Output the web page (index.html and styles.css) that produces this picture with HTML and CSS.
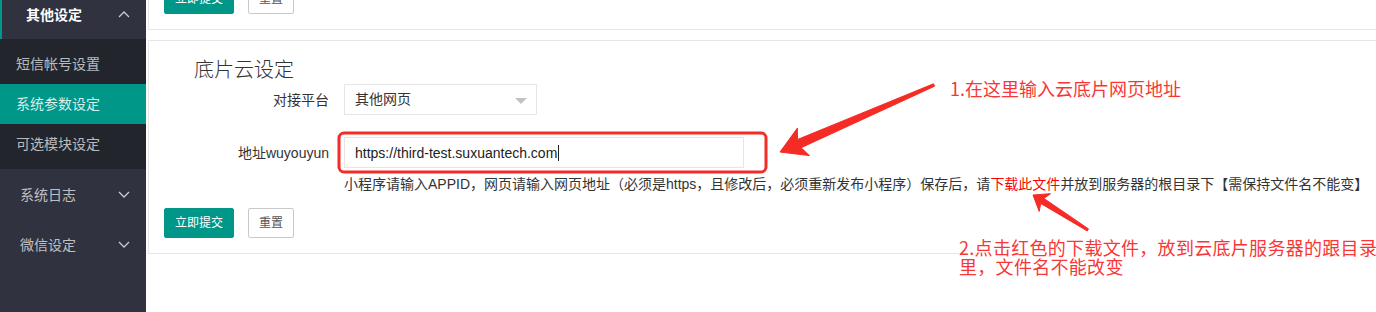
FILE: index.html
```html
<!DOCTYPE html>
<html lang="zh-CN">
<head>
  <meta charset="UTF-8" />
  <meta name="viewport" content="width=device-width, initial-scale=1.0"/>
  <title>系统参数设定</title>
  <link rel="stylesheet" href="styles.css">
</head>
<body>
  <div class="layout">
    <aside class="side">
      <ul class="nav">
        <li class="nav-item open">
          <a href="#">其他设定
            <svg class="chev" width="12" height="7" viewBox="0 0 12 7"><path d="M1 6 L6 1 L11 6" /></svg>
          </a>
          <dl class="nav-child">
            <dd><a href="#">短信帐号设置</a></dd>
            <dd class="active"><a href="#">系统参数设定</a></dd>
            <dd><a href="#">可选模块设定</a></dd>
          </dl>
        </li>
        <li class="nav-item">
          <a href="#">系统日志
            <svg class="chev" width="12" height="7" viewBox="0 0 12 7"><path d="M1 1 L6 6 L11 1" /></svg>
          </a>
        </li>
        <li class="nav-item">
          <a href="#">微信设定
            <svg class="chev" width="12" height="7" viewBox="0 0 12 7"><path d="M1 1 L6 6 L11 1" /></svg>
          </a>
        </li>
      </ul>
    </aside>

    <main class="main">
      <div class="card">
        <div class="btn-row">
          <button class="btn">立即提交</button>
          <button class="btn btn-plain">重置</button>
        </div>
      </div>

      <div class="card">
        <h2 class="card-title">底片云设定</h2>
        <div class="form-row">
          <label class="form-label">对接平台</label>
          <div class="select">其他网页</div>
        </div>
        <div class="form-row">
          <label class="form-label">地址wuyouyun</label>
          <div class="input">https://third-test.suxuantech.com<span class="caret"></span></div>
        </div>
        <div class="form-aux">小程序请输入APPID，网页请输入网页地址（必须是https，且修改后，必须重新发布小程序）保存后，请<a href="#" class="red">下载此文件</a>并放到服务器的根目录下【需保持文件名不能变】</div>
        <div class="btn-row btn-row-bottom">
          <button class="btn">立即提交</button>
          <button class="btn btn-plain">重置</button>
        </div>
      </div>
    </main>
  </div>

  <!-- screenshot markup drawn on top -->
  <div class="markup">
    <svg width="1376" height="312" viewBox="0 0 1376 312">
      <rect x="339" y="133" width="427" height="39" rx="5" class="mark-box" />
      <polygon class="mark-arrow" points="780,152 797.4,128.1 797.5,139.5 933.5,83.8 934.6,86.2 801.1,147.7 809.4,155.6" />
      <polygon class="mark-arrow" points="1033,195 1050.5,193.7 1043.9,198.4 1088.5,228.9 1087.2,230.9 1040.7,203.4 1039.2,211.4" />
    </svg>
    <div class="note note-one">1.在这里输入云底片网页地址</div>
    <div class="note note-two">2.点击红色的下载文件，放到云底片服务器的跟目录里，文件名不能改变</div>
  </div>
</body>
</html>
```

FILE: styles.css
```css
* {
  box-sizing: border-box;
}
html, body {
  margin: 0;
  height: 100%;
  overflow: hidden;
}
body {
  position: relative;
  font-family: "Liberation Sans", "Noto Sans CJK SC", sans-serif;
  font-size: 14px;
  color: #333;
  background: #fff;
}
a {
  text-decoration: none;
}

.layout {
  display: flex;
  height: 100vh;
}

/* side menu */
.side {
  width: 146px;
  flex: none;
  background: #30323f;
  overflow: hidden;
}
.nav {
  list-style: none;
  margin: -11px 0 0;
  padding: 0;
}
.nav-item > a {
  display: flex;
  align-items: center;
  justify-content: space-between;
  height: 50px;
  padding: 0 16px 0 20px;
  color: rgba(255, 255, 255, .7);
}
.nav-item.open > a {
  color: #fff;
  font-weight: bold;
  padding-left: 24px;
  border-left: 2px solid #009688;
}
.chev path {
  fill: none;
  stroke: rgba(255, 255, 255, .75);
  stroke-width: 1.3;
}
.nav-child {
  margin: 0;
  padding: 5px 0;
  background: #23252c;
}
.nav-child dd {
  margin: 0;
}
.nav-child a {
  display: block;
  height: 40px;
  line-height: 40px;
  padding-left: 16px;
  color: rgba(255, 255, 255, .7);
}
.nav-child .active a {
  background: #009688;
  color: rgba(255, 255, 255, .85);
}

/* page body, scrolled a little */
.main {
  flex: 1;
  margin: -32px -10px 0 0;
  padding-left: 2px;
}
.card {
  border: 1px solid #e6e6e6;
  padding: 15px;
  background: #fff;
}
.card + .card {
  margin-top: 10px;
}
.card-title {
  margin: 0 0 0 30px;
  font-size: 20px;
  font-weight: 300;
  line-height: 28px;
  color: #333;
}
.form-row {
  display: flex;
  align-items: center;
  gap: 15px;
}
.form-row + .form-row {
  margin-top: 22px;
}
.form-label {
  width: 165px;
  text-align: right;
  line-height: 20px;
}
.select {
  position: relative;
  width: 193px;
  height: 31px;
  line-height: 29px;
  padding-left: 10px;
  border: 1px solid #e6e6e6;
  color: #333;
}
.select::after {
  content: "";
  position: absolute;
  right: 9px;
  top: 13px;
  border-style: solid;
  border-width: 6px 6px 0;
  border-color: #c2c2c2 transparent transparent;
}
.input {
  display: flex;
  align-items: center;
  width: 400px;
  height: 31px;
  padding-left: 10px;
  border: 1px solid #e6e6e6;
  color: #222;
}
.caret {
  width: 1px;
  height: 16px;
  margin-left: 1px;
  background: #222;
}
.form-aux {
  margin: 6px 0 0 180px;
  line-height: 20px;
  white-space: nowrap;
  color: #333;
}
.form-aux .red {
  color: #f00;
}

.btn-row {
  display: flex;
  gap: 14px;
}
.btn-row-bottom {
  margin-top: 14px;
}
.btn {
  height: 30px;
  padding: 0 10px;
  border: 1px solid #009688;
  border-radius: 2px;
  background: #009688;
  color: #fff;
  font-family: inherit;
  font-size: 12px;
  line-height: 28px;
}
.btn-plain {
  background: #fff;
  border-color: #c9c9c9;
  color: #555;
}

/* red markup layer */
.markup {
  position: absolute;
  top: 0;
  left: 0;
  width: 1376px;
  height: 312px;
  pointer-events: none;
}
.markup svg {
  display: block;
}
.mark-box {
  fill: none;
  stroke: #f52b26;
  stroke-width: 3;
}
.mark-arrow {
  fill: #f52b26;
  stroke: #f52b26;
  stroke-width: 1;
  stroke-linejoin: round;
}
.note {
  position: absolute;
  font-family: "Noto Sans CJK SC", sans-serif;
  font-size: 18px;
  color: #f93636;
}
.note-one {
  left: 950px;
  top: 76px;
  line-height: 24px;
}
.note-two {
  left: 959px;
  top: 238px;
  width: 430px;
  line-height: 19px;
  letter-spacing: 0.3px;
  background: #fff;
}
```
